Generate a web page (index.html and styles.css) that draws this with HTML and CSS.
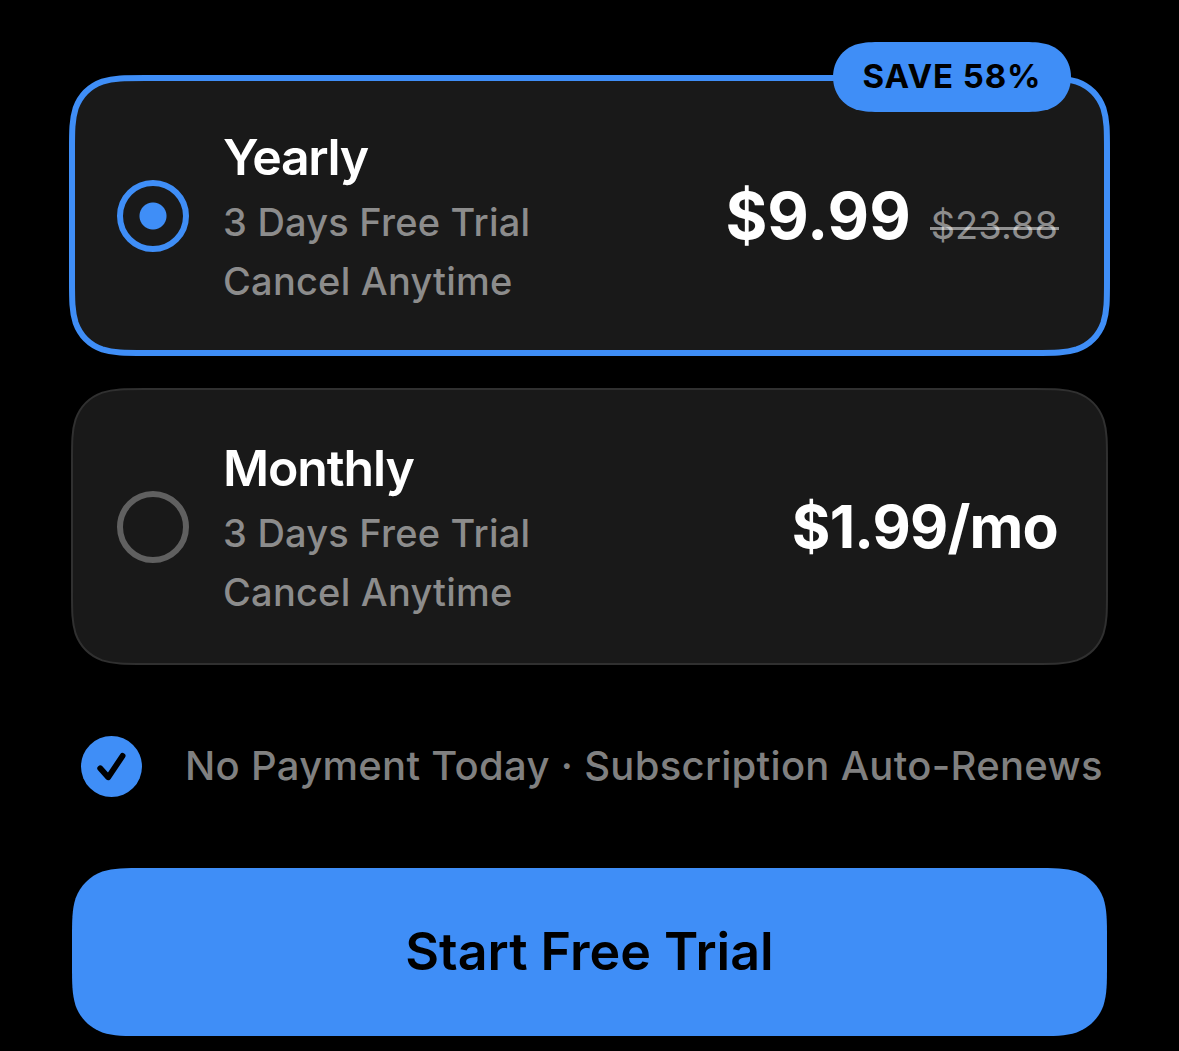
FILE: index.html
```html
<!DOCTYPE html>
<html lang="en">
<head>
<meta charset="utf-8">
<title>Choose a plan</title>
<link rel="stylesheet" href="styles.css">
</head>
<body>
<div class="paywall">
	<label class="plan selected">
		<svg class="panel" viewBox="0 0 1041 281" aria-hidden="true">
			<path d="M76.4 3H964.6C985.700 3 996.300 3 1007.700 6.600C1020.100 11.100 1029.900 20.900 1034.400 33.300C1038 44.700 1038 55.300 1038 76.400V204.600C1038 225.700 1038 236.300 1034.400 247.700C1029.900 260.100 1020.100 269.900 1007.700 274.400C996.300 278 985.700 278 964.600 278H76.400C55.300 278 44.700 278 33.300 274.400C20.900 269.900 11.100 260.100 6.600 247.700C3 236.300 3 225.700 3 204.600V76.400C3 55.300 3 44.700 6.600 33.300C11.100 20.900 20.900 11.100 33.300 6.600C44.700 3 55.300 3 76.400 3Z"/>
		</svg>
		<span class="badge">
			<svg class="panel" viewBox="0 0 238 70" aria-hidden="true">
				<path d="M50 0H188C200 0 206 .3 213 2C229 6 238 20 238 35S229 64 213 68C206 69.700 200 70 188 70H50C38 70 32 69.700 25 68C9 64 0 50 0 35S9 6 25 2C32 .3 38 0 50 0Z"/>
			</svg>
			<span class="badge-text">SAVE 58%</span>
		</span>
		<span class="radio"></span>
		<span class="info">
			<span class="name">Yearly</span>
			<span class="detail">3 Days Free Trial</span>
			<span class="detail">Cancel Anytime</span>
		</span>
		<span class="cost">
			<span class="price">$9.99</span>
			<s class="old-price">$23.88</s>
		</span>
	</label>
	<label class="plan">
		<svg class="panel" viewBox="0 0 1041 281" aria-hidden="true">
			<path d="M76.4 3H964.6C985.700 3 996.300 3 1007.700 6.600C1020.100 11.100 1029.900 20.900 1034.400 33.300C1038 44.700 1038 55.300 1038 76.400V204.600C1038 225.700 1038 236.300 1034.400 247.700C1029.900 260.100 1020.100 269.900 1007.700 274.400C996.300 278 985.700 278 964.600 278H76.400C55.300 278 44.700 278 33.300 274.400C20.900 269.900 11.100 260.100 6.600 247.700C3 236.300 3 225.700 3 204.600V76.400C3 55.300 3 44.700 6.600 33.300C11.100 20.900 20.900 11.100 33.300 6.600C44.700 3 55.300 3 76.400 3Z"/>
		</svg>
		<span class="radio"></span>
		<span class="info">
			<span class="name">Monthly</span>
			<span class="detail">3 Days Free Trial</span>
			<span class="detail">Cancel Anytime</span>
		</span>
		<span class="cost">
			<span class="price monthly">$1.99/mo</span>
		</span>
	</label>
	<div class="notice">
		<svg class="check" viewBox="0 0 62 62" aria-hidden="true">
			<circle cx="31.500" cy="31.500" r="30.500"/>
			<path d="M20.200 33.300L28.200 42.300L42.600 20.900"/>
		</svg>
		<span class="notice-text">No Payment Today · Subscription Auto-Renews</span>
	</div>
	<button class="start" type="button">
		<svg class="panel" viewBox="0 0 1035 168" aria-hidden="true">
			<path d="M73.400 0H961.600C982.700 0 993.300 0 1004.700 3.600C1017.100 8.100 1026.900 17.900 1031.400 30.300C1035 41.700 1035 52.300 1035 73.400V94.600C1035 115.700 1035 126.300 1031.400 137.700C1026.900 150.100 1017.100 159.900 1004.700 164.400C993.300 168 982.700 168 961.600 168H73.400C52.300 168 41.700 168 30.300 164.400C17.900 159.900 8.100 150.100 3.600 137.700C0 126.300 0 115.700 0 94.600V73.400C0 52.300 0 41.700 3.600 30.300C8.100 17.900 17.900 8.100 30.300 3.600C41.700 0 52.300 0 73.400 0Z"/>
		</svg>
		<span class="start-text">Start Free Trial</span>
	</button>
</div>
</body>
</html>
```
FILE: styles.css
```css
html,body{margin:0;padding:0}
body{background:#000;color:#fff;font-family:Inter,"Liberation Sans",sans-serif}
.paywall{display:flex;flex-direction:column;padding:75px 69px 0}
.plan{position:relative;display:flex;align-items:center;box-sizing:border-box;width:1041px;height:281px;margin-bottom:30px;padding:0 52px 0 48px}
.panel{position:absolute;top:0;left:0;width:100%;height:100%}
.plan .panel path{fill:#191919;stroke:#303030;stroke-width:2}
.selected > .panel path{stroke:#3f8ef7;stroke-width:6}
.badge{position:absolute;top:-33px;right:39px;width:238px;height:70px;color:#000;font-size:33px;font-weight:700;line-height:69px;text-align:center;letter-spacing:.9px;white-space:nowrap}
.plan .badge path{fill:#3f8ef7;stroke:none}
.badge-text{position:relative}
.radio{position:relative;box-sizing:border-box;width:72px;height:72px;border:6px solid #606060;border-radius:50%}
.selected .radio{border-color:#3f8ef7;background:radial-gradient(circle,#3f8ef7 13px,transparent 14px)}
.info{position:relative;display:flex;flex-direction:column;margin-left:34px;padding-top:3px;white-space:nowrap}
.name{margin-bottom:3px;font-size:50px;font-weight:600;line-height:66px;letter-spacing:-1.1px}
.selected .name{letter-spacing:-1.4px}
.detail{color:#8c8c8c;font-size:38px;font-weight:500;line-height:59px;letter-spacing:.22px}
.cost{position:relative;display:flex;align-items:baseline;gap:20px;margin-left:auto;white-space:nowrap}
.price{font-size:64px;font-weight:700}
.monthly{font-size:59px;letter-spacing:-.8px}
.old-price{position:relative;color:#8c8c8c;font-size:38px;font-weight:400;text-decoration:none}
.old-price::after{content:"";position:absolute;top:25px;left:-1px;right:-1px;height:3px;background:rgba(255,255,255,.52)}
.notice{display:flex;align-items:center;height:62px;margin:38px 0 0 11px}
.check{width:62px;height:62px}
.check circle{fill:#3f8ef7}
.check path{fill:none;stroke:#000;stroke-width:5.8;stroke-linecap:round;stroke-linejoin:round}
.notice-text{margin-left:43px;padding-bottom:2px;color:#808080;font-size:40px;font-weight:500;letter-spacing:.3px;white-space:nowrap}
.start{position:relative;width:1035px;height:168px;margin:71px 0 0 3px;padding:0 0 1px;border:0;background:none;color:#000;font:600 52px Inter,"Liberation Sans",sans-serif}
.start .panel path{fill:#3f8ef7}
.start-text{position:relative}
```
